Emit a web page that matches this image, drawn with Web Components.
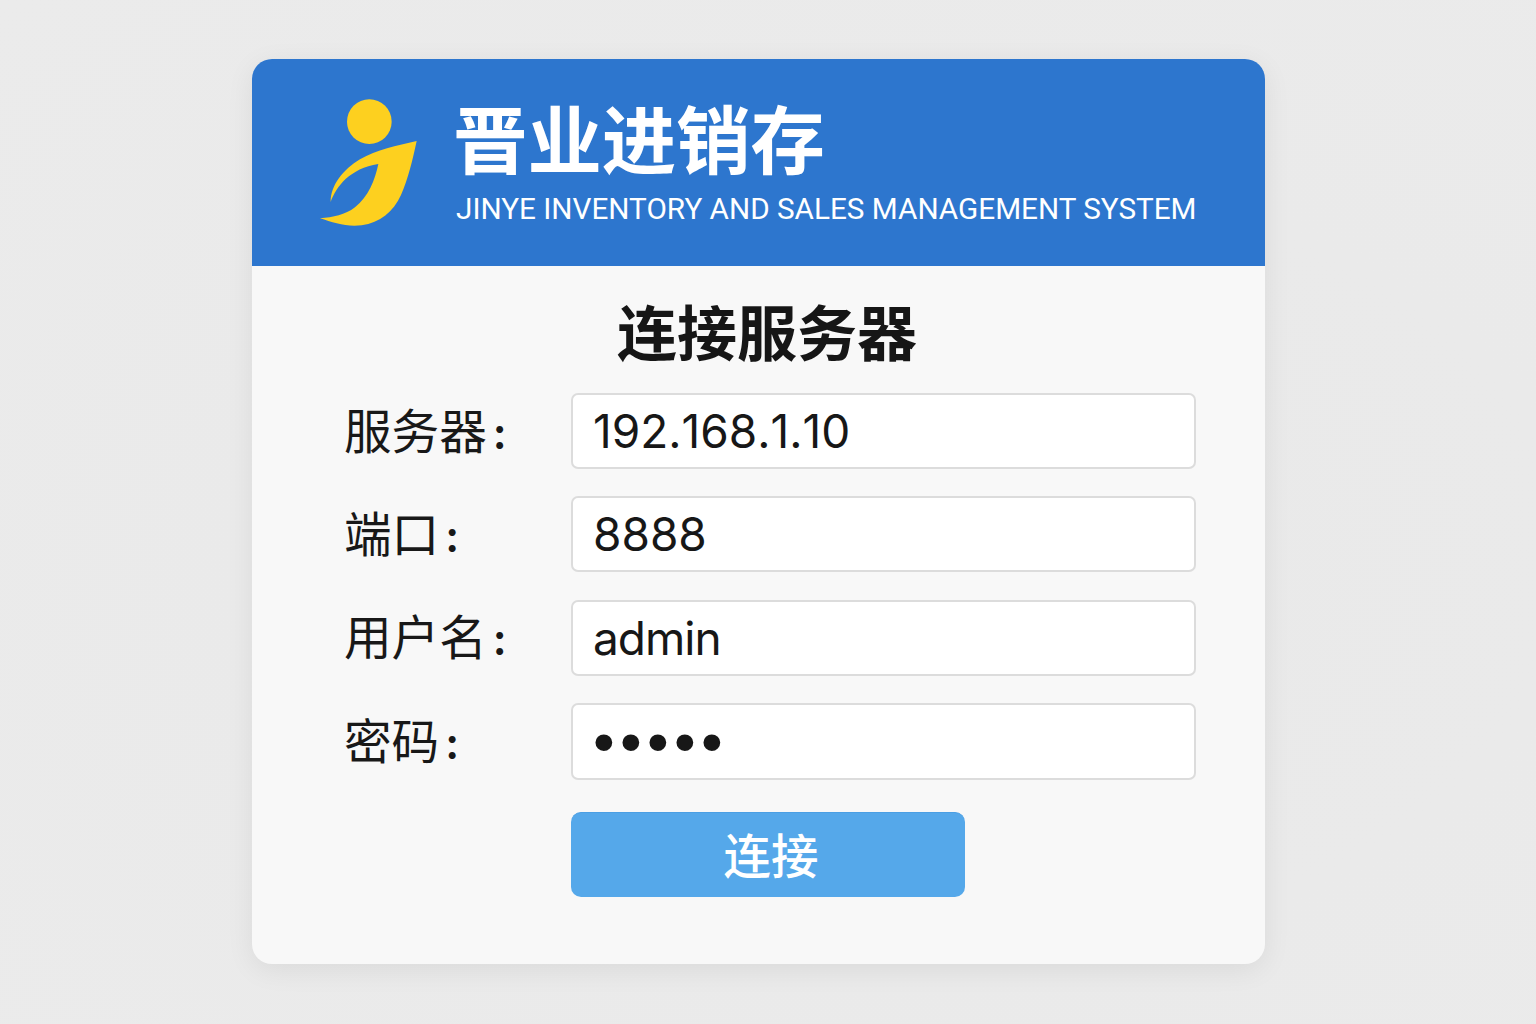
<!DOCTYPE html>
<html lang="zh-CN">
  <head>
    <meta charset="utf-8" />
    <title>晋业进销存</title>
    <style>
      html, body {
        margin: 0;
        height: 100%;
      }
      body {
        background: radial-gradient(ellipse at 60% 55%, #e9e9e9, #ebebeb);
        font-family: "Noto Sans CJK SC", sans-serif;
        overflow: hidden;
      }
      main {
        box-sizing: border-box;
        height: 1024px;
        padding: 59px 0 0 252px;
      }
    </style>
  </head>
  <body>
    <main>
      <login-card>
        <brand-header slot="header" title-text="晋业进销存" sub-text="JINYE INVENTORY AND SALES MANAGEMENT SYSTEM"></brand-header>
        <form-field label="服务器" height="76">192.168.1.10</form-field>
        <form-field label="端口" height="76">8888</form-field>
        <form-field label="用户名" height="76" tracking="-1">admin</form-field>
        <form-field label="密码" height="77" secret>•••••</form-field>
        <connect-button>连接</connect-button>
      </login-card>
    </main>
    <script>
      class JinyeLogo extends HTMLElement {
        constructor() {
          super();
          this.attachShadow({ mode: "open" });
          this.shadowRoot.innerHTML = `
            <style>
              :host { display: block; width: 140px; height: 160px; }
              svg { display: block; }
            </style>
            <svg width="140" height="160" viewBox="0 0 420 480" fill="#fdd01f">
              <circle cx="208" cy="125" r="67" />
              <path d="M350 183 C290 198 230 208 180 238 C130 268 92 315 92 366 C108 320 150 265 235 252 C225 300 205 350 165 382 C135 405 100 412 60 415 C100 428 140 442 185 436 C240 428 280 395 303 345 C325 295 338 240 350 183 Z" />
            </svg>`;
        }
      }
      customElements.define("jinye-logo", JinyeLogo);

      class BrandHeader extends HTMLElement {
        constructor() {
          super();
          this.attachShadow({ mode: "open" });
        }

        connectedCallback() {
          this.shadowRoot.innerHTML = `
            <style>
              :host {
                display: flex;
                align-items: flex-start;
                box-sizing: border-box;
                height: 207px;
                padding: 21px 0 0 48px;
                background: #2d76ce;
                color: #fff;
              }
              .text { margin-left: 16px; }
              .title {
                font: 700 74.4px/90px "Noto Sans CJK SC", sans-serif;
                margin: 11px 0 0 -3px;
                white-space: nowrap;
              }
              .sub {
                font: 400 29.7px/34px Roboto, sans-serif;
                margin-top: 11px;
                white-space: nowrap;
              }
            </style>
            <jinye-logo></jinye-logo>
            <div class="text">
              <div class="title">${this.getAttribute("title-text")}</div>
              <div class="sub">${this.getAttribute("sub-text")}</div>
            </div>`;
        }
      }
      customElements.define("brand-header", BrandHeader);

      class LoginCard extends HTMLElement {
        constructor() {
          super();
          this.attachShadow({ mode: "open" });
          this.shadowRoot.innerHTML = `
            <style>
              :host {
                display: block;
                width: 1013px;
                height: 905px;
                border-radius: 20px;
                overflow: hidden;
                background: #f8f8f8;
                box-shadow: 0 6px 28px rgba(0, 0, 0, 0.07);
              }
              h1 {
                margin: 0;
                padding: 28px 0 27px 17px;
                text-align: center;
                color: #161616;
                font: 700 60px/72px "Noto Sans CJK SC", sans-serif;
              }
              .rows {
                display: flex;
                flex-direction: column;
                gap: 27.3px;
                padding: 0 69px 0 93px;
              }
            </style>
            <slot name="header"></slot>
            <h1>连接服务器</h1>
            <div class="rows"><slot></slot></div>`;
        }
      }
      customElements.define("login-card", LoginCard);

      class FormField extends HTMLElement {
        constructor() {
          super();
          this.attachShadow({ mode: "open" });
        }

        connectedCallback() {
          const h = this.getAttribute("height") || 76;
          const secret = this.hasAttribute("secret");
          const tracking = this.getAttribute("tracking") || 0;
          this.shadowRoot.innerHTML = `
            <style>
              :host {
                display: flex;
                align-items: center;
                height: ${h}px;
              }
              .label {
                box-sizing: border-box;
                width: 226px;
                height: 60px;
                flex: none;
                margin-top: -5px;
                margin-left: -1px;
                margin-right: 1px;
                color: #181818;
                font: 400 47.6px/60px "Noto Sans CJK SC", sans-serif;
                white-space: nowrap;
              }
              .colon {
                font: 700 46px/60px Lato, sans-serif;
                margin-left: 7px;
              }
              .box {
                box-sizing: border-box;
                width: 625px;
                height: 100%;
                display: flex;
                align-items: center;
                padding-left: 20px;
                background: #fff;
                border: 2px solid #dcdcdc;
                border-radius: 7px;
                color: #171717;
                font: 400 46px/60px Inter, sans-serif;
                font-kerning: none;
                letter-spacing: ${tracking}px;
              }
              .secret {
                font: 400 62px/60px "Liberation Sans", sans-serif;
                letter-spacing: 5.3px;
                padding: 2px 0 0 20px;
              }
            </style>
            <div class="label">${this.getAttribute("label")}<span class="colon">:</span></div>
            <div class="box ${secret ? "secret" : ""}"><slot></slot></div>`;
        }
      }
      customElements.define("form-field", FormField);

      class ConnectButton extends HTMLElement {
        constructor() {
          super();
          this.attachShadow({ mode: "open" });
          this.shadowRoot.innerHTML = `
            <style>
              :host {
                display: flex;
                align-items: center;
                justify-content: center;
                box-sizing: border-box;
                width: 394px;
                height: 85px;
                margin: 5px 0 0 226px;
                padding: 0 0 2px 6px;
                background: #55a8ea;
                border-top: 1px solid #4b9fe4;
                border-radius: 10px;
                color: #fff;
                font: 500 47.5px/60px "Noto Sans CJK SC", sans-serif;
              }
            </style>
            <slot></slot>`;
        }
      }
      customElements.define("connect-button", ConnectButton);
    </script>
  </body>
</html>
